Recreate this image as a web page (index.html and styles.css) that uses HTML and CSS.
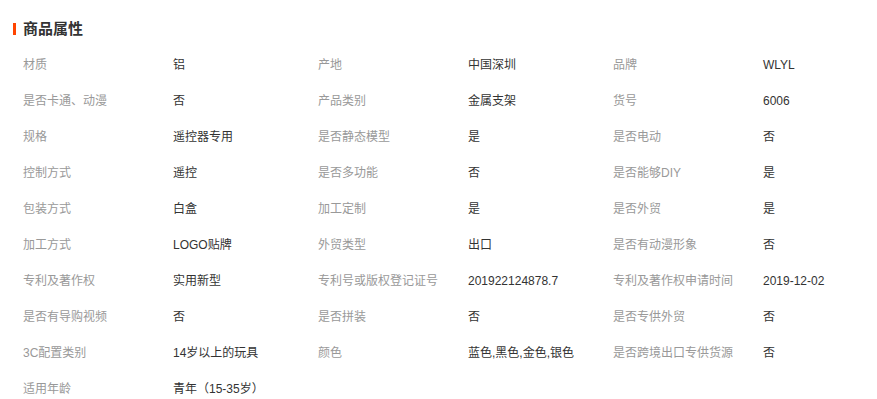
FILE: index.html
```html
<!DOCTYPE html>
<html lang="zh-CN">
<head>
<meta charset="utf-8">
<title>商品属性</title>
<link rel="stylesheet" href="styles.css">
</head>
<body>
<section class="attrs">
  <h2 class="attrs-title"><span class="attrs-bar"></span>商品属性</h2>
  <div class="attrs-grid">
    <div class="k">材质</div><div class="v">铝</div>
    <div class="k">产地</div><div class="v">中国深圳</div>
    <div class="k">品牌</div><div class="v">WLYL</div>

    <div class="k">是否卡通、动漫</div><div class="v">否</div>
    <div class="k">产品类别</div><div class="v">金属支架</div>
    <div class="k">货号</div><div class="v">6006</div>

    <div class="k">规格</div><div class="v">遥控器专用</div>
    <div class="k">是否静态模型</div><div class="v">是</div>
    <div class="k">是否电动</div><div class="v">否</div>

    <div class="k">控制方式</div><div class="v">遥控</div>
    <div class="k">是否多功能</div><div class="v">否</div>
    <div class="k">是否能够DIY</div><div class="v">是</div>

    <div class="k">包装方式</div><div class="v">白盒</div>
    <div class="k">加工定制</div><div class="v">是</div>
    <div class="k">是否外贸</div><div class="v">是</div>

    <div class="k">加工方式</div><div class="v">LOGO贴牌</div>
    <div class="k">外贸类型</div><div class="v">出口</div>
    <div class="k">是否有动漫形象</div><div class="v">否</div>

    <div class="k">专利及著作权</div><div class="v">实用新型</div>
    <div class="k">专利号或版权登记证号</div><div class="v">201922124878.7</div>
    <div class="k">专利及著作权申请时间</div><div class="v">2019-12-02</div>

    <div class="k">是否有导购视频</div><div class="v">否</div>
    <div class="k">是否拼装</div><div class="v">否</div>
    <div class="k">是否专供外贸</div><div class="v">否</div>

    <div class="k">3C配置类别</div><div class="v">14岁以上的玩具</div>
    <div class="k">颜色</div><div class="v">蓝色,黑色,金色,银色</div>
    <div class="k">是否跨境出口专供货源</div><div class="v">否</div>

    <div class="k">适用年龄</div><div class="v">青年（15-35岁）</div>
  </div>
</section>
</body>
</html>
```
FILE: styles.css
```css
html, body {
  margin: 0;
  padding: 0;
  background: #fff;
}
body {
  font-family: "Liberation Sans", "Noto Sans CJK SC", sans-serif;
  font-size: 12px;
  color: #333;
}
.attrs {
  padding: 20px 0 0 13px;
}
.attrs-title {
  display: flex;
  align-items: center;
  gap: 7px;
  margin: 0;
  height: 18px;
  line-height: 18px;
  font-size: 15px;
  font-weight: bold;
  color: #333;
}
.attrs-bar {
  display: block;
  width: 3px;
  height: 12px;
  background: #ff4400;
}
.attrs-grid {
  display: grid;
  grid-template-columns: 150px 145px 150px 145px 150px 145px;
  grid-auto-rows: 36px;
  margin: 9px 0 0 10px;
  line-height: 36px;
}
.k {
  color: #999;
  white-space: nowrap;
}
.v {
  color: #333;
  white-space: nowrap;
}
```
